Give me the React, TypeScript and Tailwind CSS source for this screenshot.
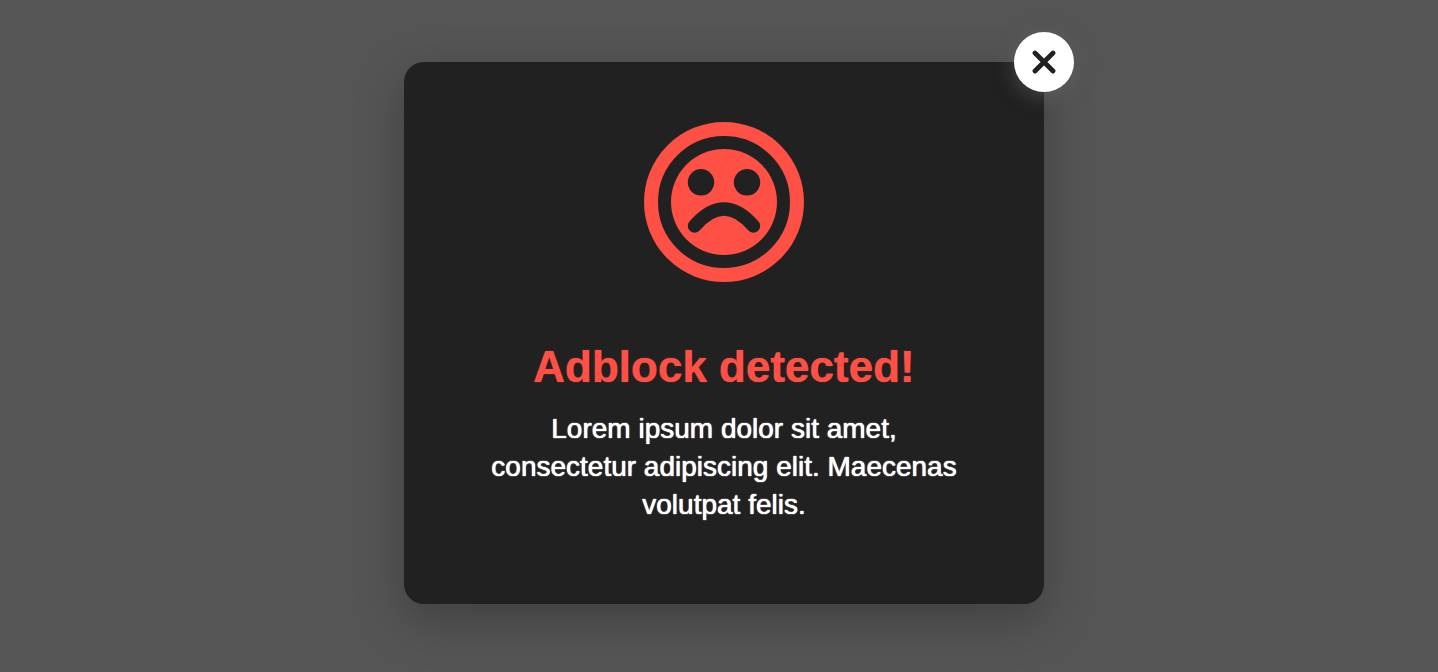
import React from 'react';

function SadFace() {
  return (
    <svg viewBox="0 0 160 160" className="size-40" aria-hidden="true">
      <circle cx="80" cy="80" r="73" fill="none" stroke="#ff5046" strokeWidth="14" />
      <circle cx="80" cy="80" r="53" fill="#ff5046" />
      <circle cx="57" cy="60.3" r="13.2" fill="#212121" />
      <circle cx="103" cy="60.3" r="13.2" fill="#212121" />
      <path d="M50.5 104 C60 93 69 87 80 87 S100 93 109.5 104" fill="none" stroke="#212121" strokeWidth="13.4" strokeLinecap="round" />
    </svg>
  );
}

export default function App() {
  return (
    <main className="flex min-h-screen items-center justify-center bg-[#555555] pb-1.5 pl-2.5 font-['Liberation_Sans',Arial,sans-serif]">
      <div
        role="dialog"
        aria-labelledby="adblock-title"
        aria-describedby="adblock-message"
        className="relative w-full max-w-[640px] rounded-[20px] bg-[#212121] px-20 pt-[60px] pb-20 text-center shadow-[0_16px_48px_rgba(0,0,0,0.25)]"
      >
        <button
          type="button"
          aria-label="Close"
          className="absolute -top-[30px] -right-[30px] flex size-[60px] items-center justify-center rounded-full bg-white text-[#212121] shadow-[0_4px_20px_rgba(100,100,100,0.6)]"
        >
          <svg viewBox="0 0 24 24" className="size-6" aria-hidden="true">
            <path d="M3 3 L21 21 M21 3 L3 21" fill="none" stroke="currentColor" strokeWidth="4.8" strokeLinecap="round" />
          </svg>
        </button>
        <div className="flex justify-center">
          <SadFace />
        </div>
        <h1 id="adblock-title" className="mt-[60px] text-[44px] leading-[50px] font-bold text-[#ff5046] text-shadow-[0_0_1px_#ff5046]">
          Adblock detected!
        </h1>
        <p id="adblock-message" className="mt-[18px] text-[28px] leading-[38px] text-white text-shadow-[0_0_1px_#ffffff,0_0_1px_#ffffff]">
          Lorem ipsum dolor sit amet, consectetur adipiscing elit. Maecenas volutpat felis.
        </p>
      </div>
    </main>
  );
}
